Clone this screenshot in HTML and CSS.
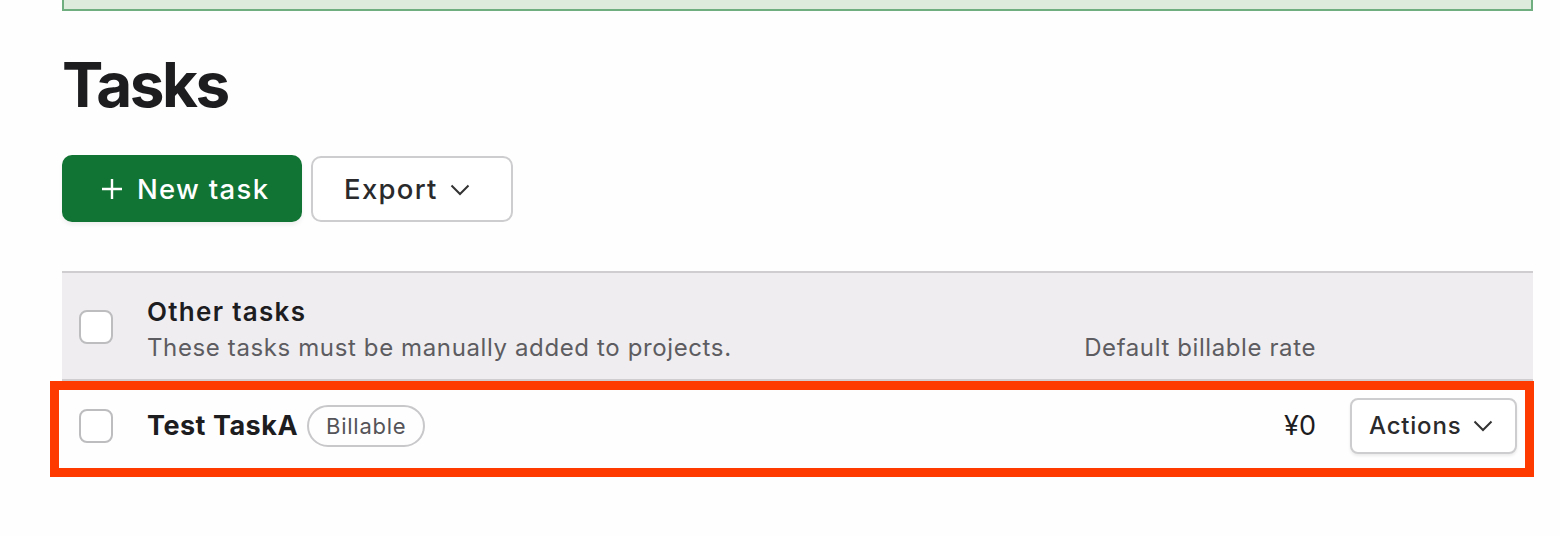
FILE: index.html
```html
<!DOCTYPE html>
<html>
<head>
<meta charset="utf-8">
<link rel="stylesheet" href="styles.css">
</head>
<body>
<div class="page">
  <div class="banner"></div>
  <h1 class="title">Tasks</h1>
  <div class="toolbar">
    <button class="btn btn-primary">
      <svg class="plus" width="22" height="22" viewBox="0 0 22 22"><path d="M11 1V21M1 11H21" stroke="#fff" stroke-width="2.4" fill="none"/></svg>
      <span>New task</span>
    </button>
    <button class="btn btn-secondary">
      <span>Export</span>
      <svg class="chev" width="20" height="12" viewBox="0 0 20 12"><path d="M1.5 1.5L10 10L18.5 1.5" stroke="#333" stroke-width="2" fill="none"/></svg>
    </button>
  </div>

  <div class="table">
    <div class="thead">
      <span class="checkbox cb-head"></span>
      <div class="group">
        <div class="group-name">Other tasks</div>
        <div class="group-sub">These tasks must be manually added to projects.</div>
      </div>
      <div class="rate-head">Default billable rate</div>
      <div></div>
    </div>
    <div class="row">
      <span class="checkbox"></span>
      <div class="task">
        <span class="task-name">Test TaskA</span>
        <span class="pill">Billable</span>
      </div>
      <div class="rate">¥0</div>
      <button class="btn-actions">
        <span>Actions</span>
        <svg width="20" height="12" viewBox="0 0 20 12"><path d="M1.5 1.5L10 10L18.5 1.5" stroke="#333" stroke-width="2" fill="none"/></svg>
      </button>
      <div class="highlight"></div>
    </div>
  </div>
</div>
</body>
</html>
```

FILE: styles.css
```css
* { box-sizing: border-box; }
html, body { margin: 0; padding: 0; background: #fefefe; }
body {
  font-family: Inter, "Noto Sans", "Liberation Sans", sans-serif;
  color: #1d1c1f;
  width: 1560px;
  height: 536px;
  overflow: hidden;
}
.page {
  margin-left: 62px;
  width: 1471px;
}
.banner {
  height: 11px;
  background: #dcebdc;
  border: 2px solid #6fae7e;
  border-top: none;
}
.title {
  margin: 37.5px 0 0 0;
  font-size: 62px;
  line-height: 72px;
  font-weight: 700;
  letter-spacing: -2.5px;
}
.toolbar {
  margin-top: 34.5px;
  display: flex;
  gap: 9px;
  align-items: flex-start;
}
.btn {
  font-family: inherit;
  display: inline-flex;
  align-items: center;
  border-radius: 10px;
  font-size: 27.5px;
  font-weight: 500;
  letter-spacing: 1.3px;
  cursor: pointer;
}
.btn-primary {
  height: 67px;
  width: 240px;
  background: #127434;
  color: #fff;
  border: none;
  padding: 0 0 0 39px;
  gap: 14px;
  box-shadow: 0 3px 4px rgba(0,0,0,0.06);
}
.btn-secondary {
  margin-top: 1px;
  height: 66px;
  width: 202px;
  background: #fff;
  color: #2a2a2c;
  border: 2px solid #cdcdcf;
  padding: 0 0 0 31px;
  gap: 12px;
}
.chev { margin-top: 2px; }

.table {
  margin-top: 49px;
}
.thead {
  display: grid;
  grid-template-columns: 34px 1fr auto 167px;
  column-gap: 34px;
  padding: 22.5px 16px 15.5px 17px;
  background: #efedf0;
  border-top: 2px solid #cfcdd0;
  border-bottom: 2px solid #cfcdd0;
}
.checkbox {
  display: block;
  width: 34px;
  height: 34px;
  background: #fff;
  border: 2px solid #bdbcbf;
  border-radius: 8px;
}
.cb-head {
  align-self: start;
  margin-top: 14px;
}
.group-name {
  font-size: 26px;
  line-height: 32px;
  font-weight: 600;
  letter-spacing: 1.3px;
  color: #1d1c1f;
}
.group-sub {
  margin-top: 4px;
  font-size: 24px;
  line-height: 32px;
  letter-spacing: 0.62px;
  color: #5d5c60;
}
.rate-head {
  align-self: end;
  font-size: 24px;
  line-height: 32px;
  letter-spacing: 0.6px;
  color: #5d5c60;
}
.row {
  position: relative;
  display: grid;
  grid-template-columns: 34px 1fr auto 167px;
  column-gap: 34px;
  align-items: center;
  height: 90px;
  padding: 0 16px 0 17px;
  border-bottom: 1px solid #dddcdf;
}
.task {
  display: flex;
  align-items: center;
  gap: 9px;
}
.task-name {
  font-size: 27px;
  font-weight: 700;
  letter-spacing: 0.5px;
}
.pill {
  display: inline-flex;
  align-items: center;
  height: 42px;
  padding: 0 17px;
  border: 2px solid #c8c7ca;
  border-radius: 21px;
  font-size: 22px;
  letter-spacing: 0.75px;
  color: #555458;
}
.rate {
  font-size: 27px;
}
.btn-actions {
  font-family: inherit;
  height: 56px;
  width: 167px;
  display: inline-flex;
  align-items: center;
  gap: 12px;
  padding: 0 0 0 17px;
  background: #fff;
  border: 2px solid #cdcdcf;
  border-radius: 8px;
  font-size: 24px;
  font-weight: 500;
  letter-spacing: 0.8px;
  color: #2a2a2c;
  box-shadow: 0 2px 3px rgba(0,0,0,0.08);
}
.highlight {
  position: absolute;
  left: -12px;
  top: 0;
  right: -1px;
  bottom: -7px;
  border: 9px solid #ff3a00;
  pointer-events: none;
}
```
